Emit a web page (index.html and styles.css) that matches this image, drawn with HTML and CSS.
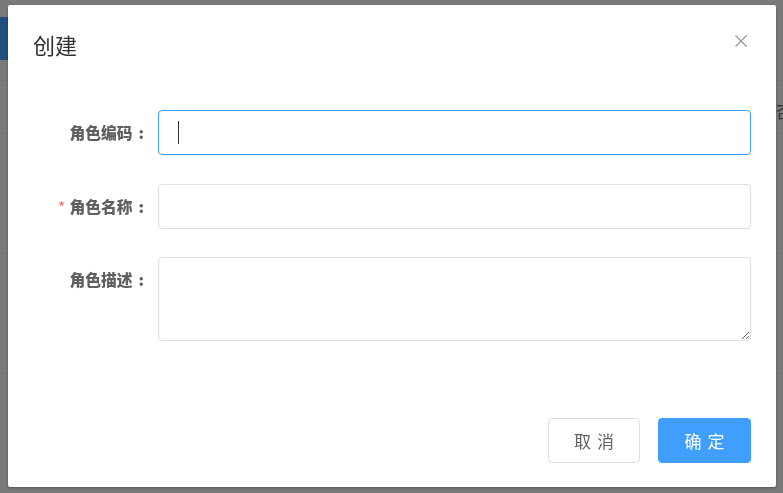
FILE: index.html
```html
<!DOCTYPE html>
<html lang="zh-CN">
<head>
<meta charset="utf-8">
<title>创建</title>
<link rel="stylesheet" href="styles.css">
</head>
<body>
<div class="page">
  <div class="page-tab"></div>
  <div class="page-row row-a"></div>
  <div class="page-row row-b"><span class="cell-text">否</span></div>
  <div class="page-row row-c"></div>
  <div class="page-row row-d"></div>
</div>
<div class="mask"></div>
<div class="dialog" role="dialog">
  <div class="dialog-header">
    <span class="dialog-title">创建</span>
  </div>
  <button class="dialog-close" aria-label="Close">
    <svg width="12" height="12" viewBox="0 0 12 12"><path d="M0.5 0.5 L11.5 11.5 M11.5 0.5 L0.5 11.5" stroke="#909399" stroke-width="1.2" fill="none"/></svg>
  </button>
  <div class="dialog-body">
    <div class="form-item">
      <label class="form-label">角色编码<span class="colon">:</span></label>
      <div class="form-control">
        <input class="input is-focus" type="text">
        <span class="caret"></span>
      </div>
    </div>
    <div class="form-item">
      <label class="form-label"><span class="required">*</span>角色名称<span class="colon">:</span></label>
      <div class="form-control">
        <input class="input" type="text">
      </div>
    </div>
    <div class="form-item last">
      <label class="form-label">角色描述<span class="colon">:</span></label>
      <div class="form-control">
        <textarea class="textarea"></textarea>
      </div>
    </div>
  </div>
  <div class="dialog-footer">
    <button class="btn btn-default">取消</button>
    <button class="btn btn-primary">确定</button>
  </div>
</div>
</body>
</html>
```

FILE: styles.css
```css
html, body {
  margin: 0;
  padding: 0;
  height: 100%;
  overflow: hidden;
}
body {
  font-family: "Noto Sans CJK SC", "Microsoft YaHei", sans-serif;
  background: #f2f2f2;
}
.page {
  padding-top: 17px;
  height: 100%;
  box-sizing: border-box;
  overflow: hidden;
}
.page-tab {
  width: 160px;
  height: 43px;
  background: #3e9eff;
}
.page-row {
  border-bottom: 1px solid #ffffff;
  display: flex;
  justify-content: flex-end;
  align-items: center;
}
.row-a { height: 27px; }
.row-b { height: 42px; }
.row-c { height: 119px; }
.row-d { height: 119px; }
.cell-text {
  font-size: 16px;
  color: #606266;
  margin-right: -9px;
  margin-top: 4px;
}
.mask {
  position: fixed;
  inset: 0;
  background: rgba(0, 0, 0, 0.5);
}
.dialog {
  position: fixed;
  left: 8px;
  top: 5px;
  width: 768px;
  background: #fff;
  border-radius: 2px;
  box-shadow: 0 1px 3px rgba(0, 0, 0, 0.3);
  box-sizing: border-box;
}
.dialog-header {
  padding: 23.5px 25px 0;
  height: 30px;
}
.dialog-title {
  font-size: 22px;
  line-height: 30px;
  color: #303133;
}
.dialog-close {
  position: absolute;
  top: 30px;
  right: 29px;
  width: 12px;
  height: 12px;
  padding: 0;
  border: 0;
  background: transparent;
  display: block;
}
.dialog-close svg { display: block; }
.dialog-body {
  padding: 51.5px 25px 0;
}
.form-item {
  display: flex;
  margin-bottom: 28.5px;
}
.form-item.last { margin-bottom: 0; }
.form-label {
  flex: 0 0 125px;
  box-sizing: border-box;
  padding-right: 14px;
  text-align: right;
  font-size: 15.75px;
  font-weight: 900;
  color: #5f6064;
  line-height: 45px;
}
.colon { margin-left: 6px; }
.required {
  color: #f56c6c;
  margin-right: 4px;
  font-weight: normal;
}
.form-control {
  flex: 1;
  position: relative;
}
.input, .textarea {
  display: block;
  width: 100%;
  box-sizing: border-box;
  border: 1px solid #dcdfe6;
  border-radius: 4px;
  background: #fff;
  font-family: inherit;
  font-size: 16px;
  color: #606266;
  outline: none;
  padding: 0 17px;
}
.input { height: 45px; }
.input.is-focus { border-color: #409eff; }
.textarea {
  height: 84px;
  padding: 6px 17px;
  resize: vertical;
}
.caret {
  position: absolute;
  left: 20px;
  top: 11px;
  width: 1px;
  height: 23px;
  background: #303133;
}
.dialog-footer {
  padding: 77px 25px 24px;
  display: flex;
  justify-content: flex-end;
  gap: 18px;
}
.btn {
  height: 45px;
  border-radius: 4px;
  font-family: inherit;
  font-size: 17px;
  letter-spacing: 6px;
  padding: 0 0 0 6px;
  cursor: pointer;
}
.btn-default {
  width: 92px;
  background: #fff;
  border: 1px solid #dcdfe6;
  color: #606266;
}
.btn-primary {
  width: 93px;
  background: #409eff;
  border: 1px solid #409eff;
  color: #fff;
}
```
